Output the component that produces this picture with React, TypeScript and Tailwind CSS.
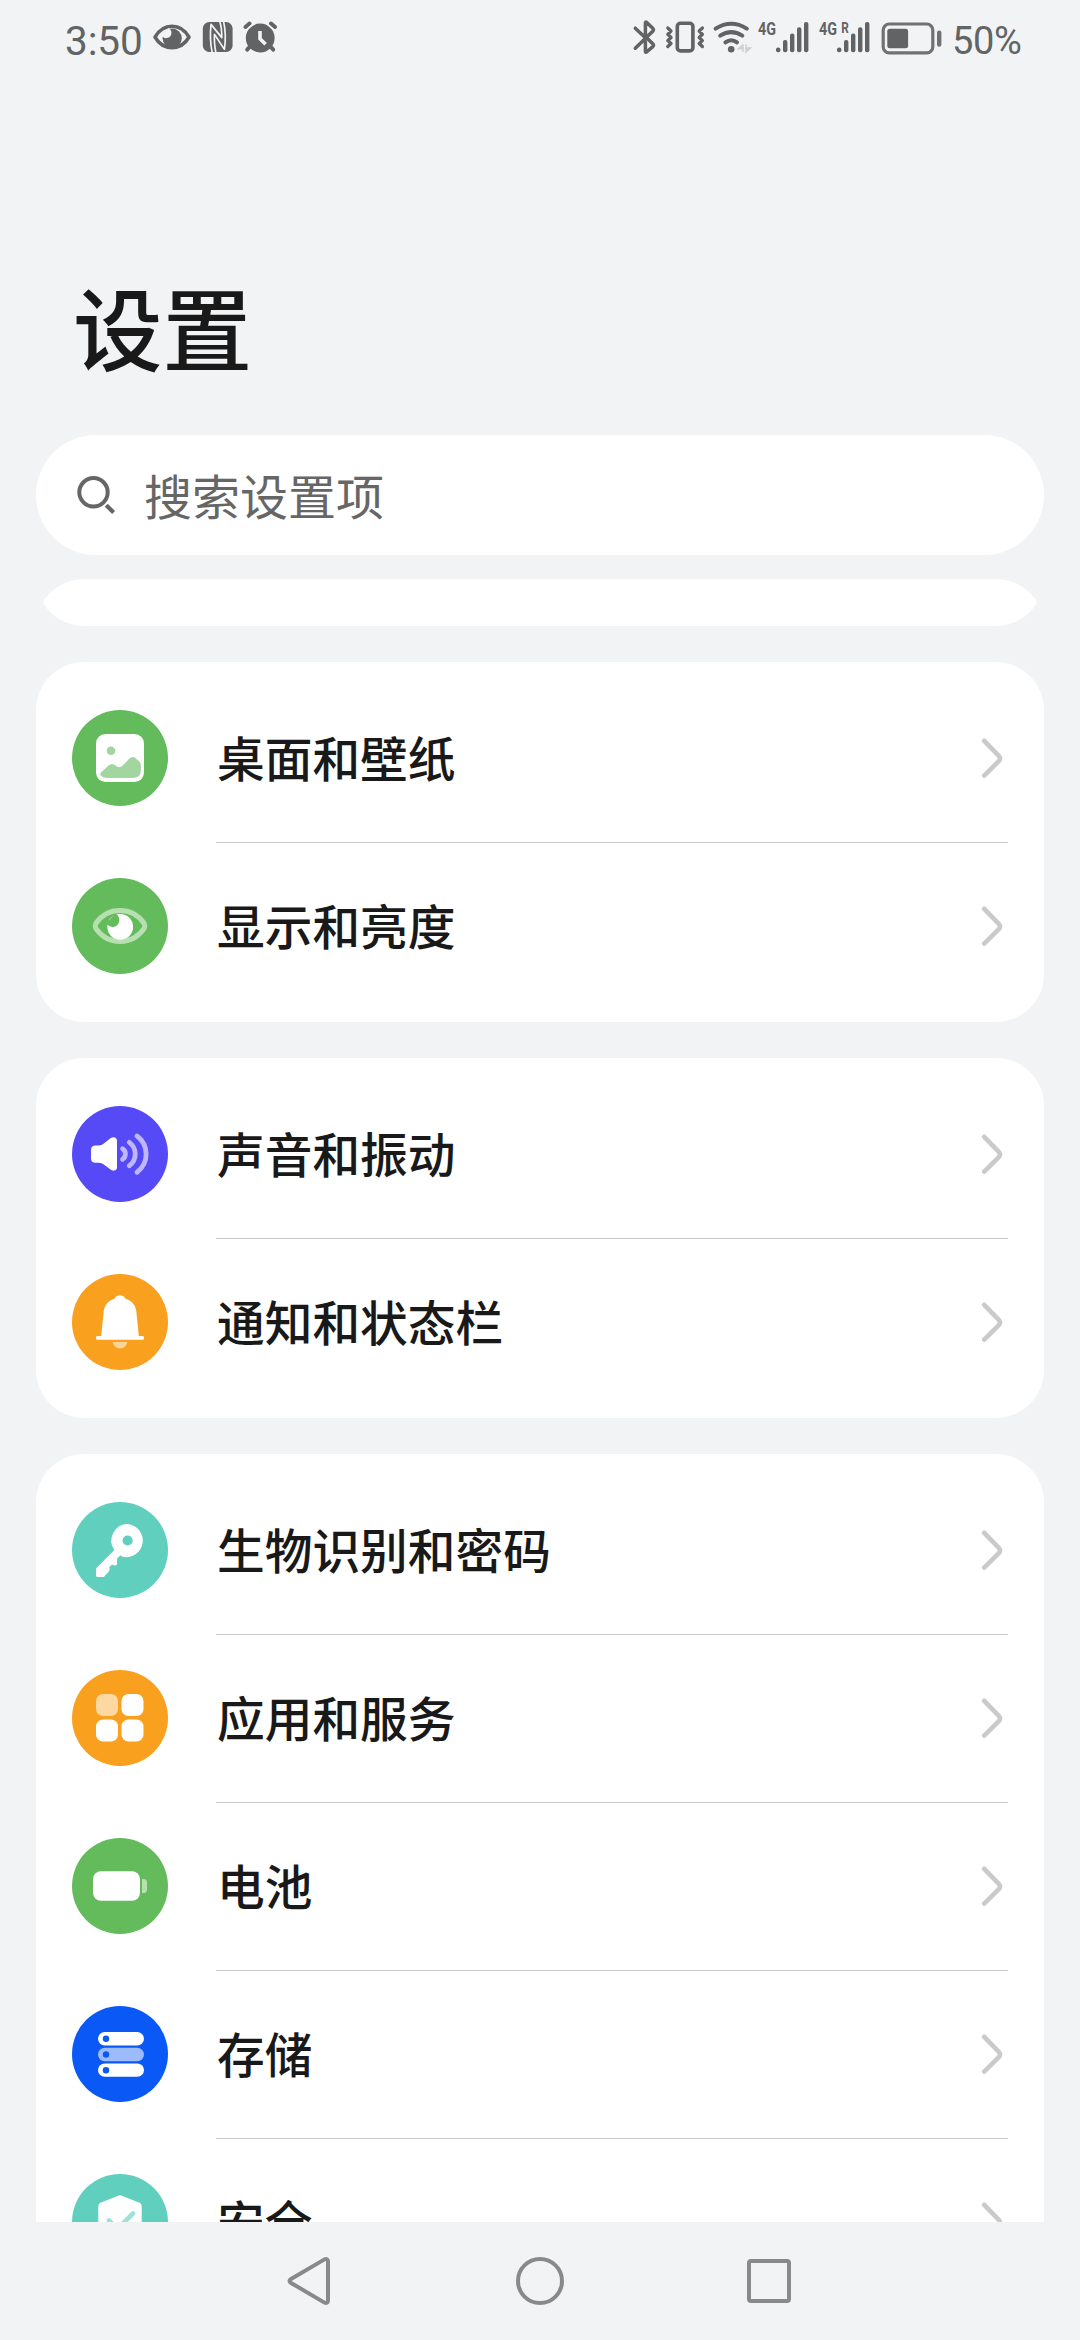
import React from "react";

const GREEN = "#64bb5c";

function WallpaperIcon() {
  return (
    <svg viewBox="0 0 96 96" className="size-24">
      <rect x="24" y="24" width="48" height="48" rx="9.5" fill="#fff" />
      <circle cx="39" cy="40.7" r="4.3" fill="#a3d5a0" />
      <path d="M28.5 63 L36.5 55.5 Q40 52.5 43.5 55.5 Q47 58.5 50.5 55.8 L57 49 Q60.8 45.4 64 48.5 L67.5 51.8 Q68.9 53.2 68.9 55 V60 Q68.9 68 60.5 68 H35.5 Q31 68 28.7 65.5 Q27.8 64 28.5 63Z" fill="#a3d5a0" />
    </svg>
  );
}

function DisplayIcon() {
  return (
    <svg viewBox="0 0 96 96" className="size-24">
      <path d="M23.8 45.5 C36 28.3 60 28.3 72.2 45.5 Q73.4 48 72.2 50.5 C60 67.7 36 67.7 23.8 50.5 Q22.6 48 23.8 45.5Z" fill="none" stroke="#b6e0b0" strokeWidth="5" />
      <circle cx="48.2" cy="48.8" r="12.9" fill="#fff" />
      <path d="M34 46 L43 35.5 A6.9 6.9 0 1 1 36.6 47.6Z" fill={GREEN} />
    </svg>
  );
}

function SoundIcon() {
  return (
    <svg viewBox="0 0 96 96" className="size-24">
      <path d="M19 44 Q19 39.5 23.5 39.5 H27 Q29.5 39.5 31.5 37.8 L38.5 32.3 Q40 31 42 31.2 Q45 31.6 45 35 V61 Q45 64.2 42 64.6 Q40 64.8 38.5 63.6 L31.5 58.3 Q29.5 56.8 27 56.8 H23.5 Q19 56.8 19 52.3Z" fill="#fff" />
      <g fill="none" stroke="#beb7fc" strokeWidth="4.8" strokeLinecap="round">
        <path d="M50.6 42.8 A6.3 6.3 0 0 1 50.6 53.3" />
        <path d="M57.3 36.4 A14.5 14.5 0 0 1 57.3 59.8" />
        <path d="M65 30 A22.5 22.5 0 0 1 65 66.2" />
      </g>
    </svg>
  );
}

function BellIcon() {
  return (
    <svg viewBox="0 0 96 96" className="size-24">
      <path d="M29.2 62 L31.5 39 C31.8 32 35.5 26.8 42.3 24.7 C43.6 22.8 45.2 21.3 48 21.3 C50.8 21.3 52.4 22.8 53.7 24.7 C60.5 26.8 64.2 32 64.5 39 L66.8 62 H70.3 A1.9 1.9 0 0 1 70.3 65.8 H25.7 A1.9 1.9 0 0 1 25.7 62Z" fill="#fff" />
      <path d="M40.8 68 H55.2 A7.2 6.4 0 0 1 40.8 68Z" fill="#fdd597" />
    </svg>
  );
}

function KeyIcon() {
  return (
    <svg viewBox="0 0 96 96" className="size-24">
      <path fillRule="evenodd" d="M55.6 22 A16.6 16.6 0 1 1 50 54.6 L48.6 53.3 L45 56.6 Q45.6 58.6 44.8 60.4 Q46 62.4 43.6 63.4 Q42.4 64 40.2 62.6 L37.2 65.2 Q38.6 67.6 37 69.2 L32.3 74.4 Q31.8 75 31 75 H25.6 Q24 75 24 73.4 V67.4 Q24 66.4 24.7 65.7 L42.3 48 A16.6 16.6 0 0 1 55.6 22Z M55.6 33.4 A5.1 5.1 0 1 0 55.6 43.6 A5.1 5.1 0 1 0 55.6 33.4Z" fill="#fff" />
    </svg>
  );
}

function AppsIcon() {
  return (
    <svg viewBox="0 0 96 96" className="size-24">
      <rect x="24" y="24" width="22" height="22" rx="7" fill="#fdd8a0" />
      <rect x="49.5" y="24" width="22" height="22" rx="7" fill="#fff" />
      <rect x="24" y="49.5" width="22" height="22" rx="7" fill="#fff" />
      <rect x="49.5" y="49.5" width="22" height="22" rx="7" fill="#fff" />
    </svg>
  );
}

function BatteryIcon() {
  return (
    <svg viewBox="0 0 96 96" className="size-24">
      <rect x="21" y="33.2" width="47" height="29.6" rx="8" fill="#fff" />
      <path d="M70 41 H71.5 Q75 41 75 44.5 V51.5 Q75 55 71.5 55 H70Z" fill="#b6e0b0" />
    </svg>
  );
}

function StorageIcon() {
  return (
    <svg viewBox="0 0 96 96" className="size-24">
      <rect x="26" y="26" width="46" height="13.4" rx="6.7" fill="#fff" />
      <rect x="26" y="41.8" width="46" height="13.4" rx="6.7" fill="#9dbafb" />
      <rect x="26" y="57.4" width="46" height="13.4" rx="6.7" fill="#fff" />
      <g fill="#0a59f7">
        <circle cx="34" cy="32.8" r="3.2" />
        <circle cx="34" cy="48.5" r="3.2" />
        <circle cx="34" cy="64.2" r="3.2" />
      </g>
    </svg>
  );
}

function ShieldIcon() {
  return (
    <svg viewBox="0 0 96 96" className="size-24">
      <path d="M46.8 21.5 Q48 21 49.2 21.5 L67.6 28.8 Q69.7 29.8 69.7 32 V50 Q69.7 66 48 75 Q26.3 66 26.3 50 V32 Q26.3 29.8 28.4 28.8Z" fill="#fff" />
      <path d="M37 46.5 L45.5 55 L61 39.5" fill="none" stroke="#9fe1d6" strokeWidth="4.6" strokeLinecap="round" strokeLinejoin="round" />
    </svg>
  );
}

function Chevron() {
  return (
    <svg viewBox="0 0 24 42" className="ml-auto mr-1 h-[42px] w-6 shrink-0">
      <path d="M4.2 2.8 L18.6 17.7 Q21.4 20.5 18.6 23.3 L4.2 37.7" fill="none" stroke="#cacaca" strokeWidth="4.6" strokeLinecap="round" />
    </svg>
  );
}

type Item = { label: string; color: string; icon: React.ReactNode };

const groups: Item[][] = [
  [
    { label: "桌面和壁纸", color: "bg-[#64bb5c]", icon: <WallpaperIcon /> },
    { label: "显示和亮度", color: "bg-[#64bb5c]", icon: <DisplayIcon /> },
  ],
  [
    { label: "声音和振动", color: "bg-[#564af7]", icon: <SoundIcon /> },
    { label: "通知和状态栏", color: "bg-[#f9a01e]", icon: <BellIcon /> },
  ],
  [
    { label: "生物识别和密码", color: "bg-[#61cfbe]", icon: <KeyIcon /> },
    { label: "应用和服务", color: "bg-[#f9a01e]", icon: <AppsIcon /> },
    { label: "电池", color: "bg-[#64bb5c]", icon: <BatteryIcon /> },
    { label: "存储", color: "bg-[#0a59f7]", icon: <StorageIcon /> },
    { label: "安全", color: "bg-[#61cfbe]", icon: <ShieldIcon /> },
  ],
];

function Row({ item, first }: { item: Item; first: boolean }) {
  return (
    <div className="flex h-[168px] items-center pl-9 pr-9">
      <div className={`size-24 shrink-0 rounded-full ${item.color}`}>{item.icon}</div>
      <div className={`ml-12 flex h-full grow items-center border-t ${first ? "border-transparent" : "border-[#c9cac9]"}`}>
        <span className="pb-[3px] pl-px text-[47.7px] leading-[72px] font-medium text-[#191919]">{item.label}</span>
        <Chevron />
      </div>
    </div>
  );
}

function Signal({ x, r }: { x: number; r?: boolean }) {
  return (
    <>
      {[0, 1, 2, 3, 4].map((i) => {
        const top = [47.6, 40, 33.5, 27.3, 22][i];
        return <rect key={i} x={x + i * 7} y={top} width="4.4" height={52.2 - top} rx="2" fill="#626365" />;
      })}
      <text x={x - 18} y="35" fontSize="18.5" fontWeight="700" fontFamily="Roboto, sans-serif" textLength="18" lengthAdjust="spacingAndGlyphs" fill="#626365">4G</text>
      {r && (
        <text x={x + 4.2} y="32.5" fontSize="15" fontWeight="700" fontFamily="Roboto, sans-serif" textLength="7.5" lengthAdjust="spacingAndGlyphs" fill="#626365">R</text>
      )}
    </>
  );
}

function StatusBar() {
  return (
    <div className="flex h-20 items-start text-[#626365]">
      <span className="ml-[65px] w-[83px] pt-px font-[Roboto,sans-serif] text-[40.5px] leading-[80px] tracking-[-0.1px]">3:50</span>
      <svg viewBox="148 0 132 80" className="h-20 w-[132px]">
        <path d="M155 37.2 C163 22.6 181 22.6 189 37.2 C181 51.2 163 51.2 155 37.2Z" fill="none" stroke="#626365" strokeWidth="3.6" strokeLinejoin="round" />
        <circle cx="172.2" cy="38.2" r="9.6" fill="#626365" />
        <path d="M161 35.5 L168.5 28 A5 5 0 1 1 163.8 37.6Z" fill="#f1f3f5" />
        <rect x="202.8" y="22" width="29.8" height="30" rx="6.5" fill="#626365" />
        <g fill="none" stroke="#f1f3f5" strokeWidth="1.7" strokeLinejoin="round">
          <path d="M212.2 52.4 Q209.4 40 211 24.4 L221.8 37.6 Q221.8 28 219.8 21.6" />
          <path d="M215.8 52.4 Q213.9 42 214.5 34.4 L224.4 49.4 Q226.6 35 223.6 21.6" />
        </g>
        <circle cx="260.2" cy="38" r="14.4" fill="#626365" />
        <g stroke="#626365" strokeWidth="4" strokeLinecap="round">
          <path d="M245.5 27 L249.5 23.6 M271 23.6 L275 27 M249 47.5 L247.3 49.6 M271.4 47.5 L273.1 49.6" />
        </g>
        <path d="M243.5 32.5 L255.5 22.2 M276.9 32.5 L264.9 22.2" stroke="#f1f3f5" strokeWidth="1.6" />
        <path d="M260 31 V38.8 L265.6 44.2" fill="none" stroke="#f1f3f5" strokeWidth="3.6" />
      </svg>
      <svg viewBox="628 0 320 80" className="ml-[348px] h-20 w-[320px]">
        <path d="M635.3 28.2 L643.8 36.2 M635.3 48.2 L653 31 Q654 29.5 652.5 28 L646.5 22.3 Q645.4 21.6 645.4 23 V36.5 L653 44 Q654 45.4 652.8 46.6 L646.6 52 Q645.4 52.6 645.4 51.3 V41.5" fill="none" stroke="#626365" strokeWidth="3.5" strokeLinecap="round" strokeLinejoin="round" />
        <rect x="677.3" y="23.3" width="15.6" height="27.6" rx="3.2" fill="none" stroke="#626365" strokeWidth="3.6" />
        <g fill="none" stroke="#626365" strokeWidth="3.3" strokeLinejoin="round" strokeLinecap="round">
          <path d="M667.8 28 L671 31 L667.8 34.3 L671 37.5 L667.8 40.6 L671 43.5 L667.8 46.5" />
          <path d="M702.4 28 L699.2 31 L702.4 34.3 L699.2 37.5 L702.4 40.6 L699.2 43.5 L702.4 46.5" />
        </g>
        <g fill="none" stroke="#626365" strokeWidth="4" strokeLinecap="round">
          <path d="M715.6 28.6 Q731.3 19 746.8 28.6" />
          <path d="M720.2 35.6 Q731.3 28.6 742.3 35.6" />
          <path d="M725.4 42.4 Q731.3 38 737 42.4" />
        </g>
        <circle cx="731.2" cy="49.2" r="3.3" fill="#626365" />
        <path d="M743 44.5 V52 M743 44.5 L738.6 48.6 H743 M746 44.5 V52 L750.3 48 H746" fill="#cfd0d1" stroke="#cfd0d1" strokeWidth="1.6" />
        <Signal x={776} />
        <Signal x={837} r />
        <rect x="883.2" y="24" width="49.6" height="28.8" rx="6" fill="none" stroke="#707173" strokeWidth="3.2" />
        <rect x="887.3" y="28.8" width="20.8" height="19.4" rx="2.5" fill="#626365" />
        <rect x="937" y="30.4" width="4.4" height="16.4" rx="2.2" fill="#707173" />
      </svg>
      <span className="ml-[4px] pt-px font-[Roboto,sans-serif] text-[38px] leading-[80px] tracking-[-0.4px]">50%</span>
    </div>
  );
}

export default function App() {
  return (
    <div className="flex h-[2340px] w-[1080px] flex-col overflow-hidden bg-[#f1f3f5] font-['Noto_Sans_CJK_SC',sans-serif]">
      <div className="h-20 shrink-0">
        <StatusBar />
      </div>
      <h1 className="mt-[180px] shrink-0 pl-[73px] text-[89.5px] leading-[130px] font-medium text-[#191919]">设置</h1>
      <div className="mx-9 mt-[45px] flex h-[120px] shrink-0 items-center rounded-full bg-white pl-10">
        <svg viewBox="0 0 42 42" className="size-[42px]">
          <circle cx="17.5" cy="18.3" r="14.2" fill="none" stroke="#666" strokeWidth="4" />
          <path d="M30.2 31.2 L37.6 38.4" stroke="#666" strokeWidth="4.2" />
        </svg>
        <span className="ml-[26px] pb-[3px] text-[48px] leading-[72px] text-[#666]">搜索设置项</span>
      </div>
      <div className="mx-9 mt-6 h-[1643px] shrink-0 overflow-hidden rounded-t-[48px]">
        <div className="-mt-[121px] h-[168px] rounded-[48px] bg-white" />
        {groups.map((group, g) => (
          <div key={g} className="mt-9 rounded-[48px] bg-white py-3">
            {group.map((item, i) => (
              <Row key={item.label} item={item} first={i === 0} />
            ))}
          </div>
        ))}
      </div>
      <div className="flex h-[118px] shrink-0 items-center">
        <svg viewBox="0 0 48 52" className="ml-[285px] h-[52px] w-12">
          <path d="M5.6 24.3 L39.5 4.4 Q43 3.3 43 6.5 V45.5 Q43 48.7 39.5 47.6 L5.6 27.7 Q3.4 26 5.6 24.3Z" fill="none" stroke="#888a89" strokeWidth="4" strokeLinejoin="round" />
        </svg>
        <div className="ml-[183px] size-12 rounded-full border-4 border-[#888a89]" />
        <div className="ml-[183px] size-11 rounded-[4px] border-4 border-[#888a89]" />
      </div>
    </div>
  );
}
